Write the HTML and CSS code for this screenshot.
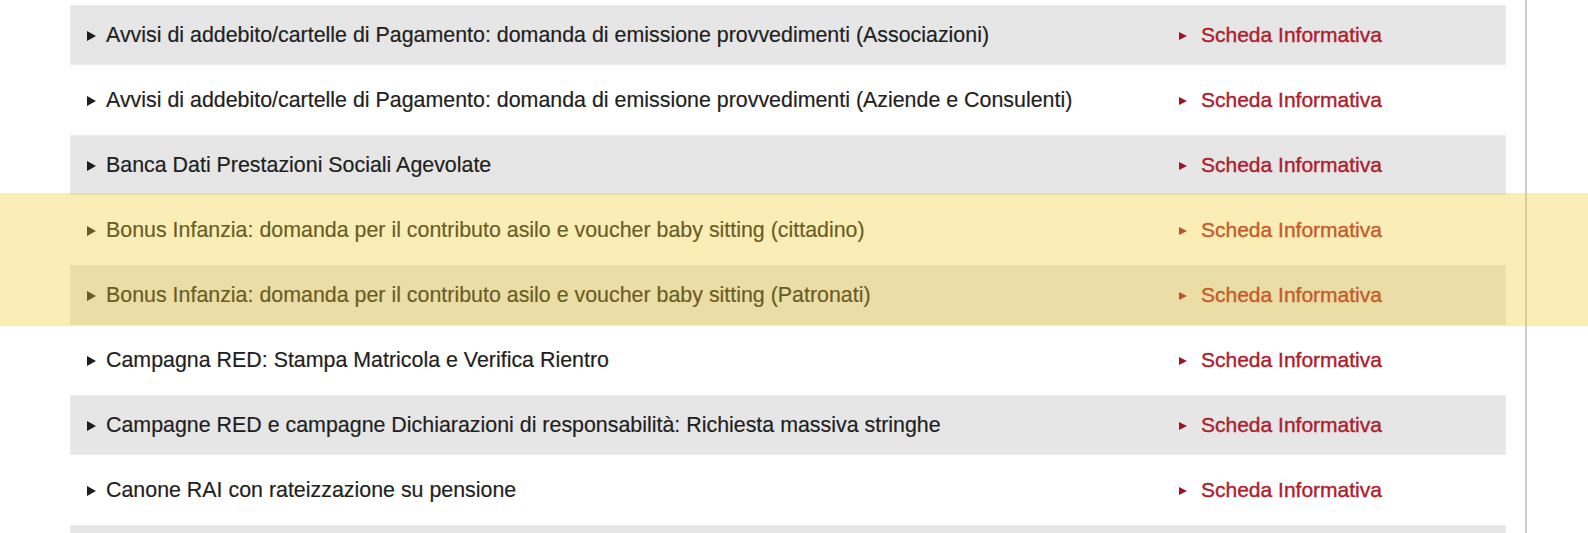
FILE: index.html
```html
<!DOCTYPE html>
<html lang="it">
<head>
<meta charset="utf-8">
<title>Servizi</title>
<link rel="stylesheet" href="styles.css">
</head>
<body>
<div class="page">
  <ul class="services">
    <li class="row alt"><span class="name">Avvisi di addebito/cartelle di Pagamento: domanda di emissione provvedimenti (Associazioni)</span><a class="info" href="#">Scheda Informativa</a></li>
    <li class="row"><span class="name">Avvisi di addebito/cartelle di Pagamento: domanda di emissione provvedimenti (Aziende e Consulenti)</span><a class="info" href="#">Scheda Informativa</a></li>
    <li class="row alt"><span class="name">Banca Dati Prestazioni Sociali Agevolate</span><a class="info" href="#">Scheda Informativa</a></li>
    <li class="row"><span class="name">Bonus Infanzia: domanda per il contributo asilo e voucher baby sitting (cittadino)</span><a class="info" href="#">Scheda Informativa</a></li>
    <li class="row alt"><span class="name">Bonus Infanzia: domanda per il contributo asilo e voucher baby sitting (Patronati)</span><a class="info" href="#">Scheda Informativa</a></li>
    <li class="row"><span class="name">Campagna RED: Stampa Matricola e Verifica Rientro</span><a class="info" href="#">Scheda Informativa</a></li>
    <li class="row alt"><span class="name">Campagne RED e campagne Dichiarazioni di responsabilità: Richiesta massiva stringhe</span><a class="info" href="#">Scheda Informativa</a></li>
    <li class="row"><span class="name">Canone RAI con rateizzazione su pensione</span><a class="info" href="#">Scheda Informativa</a></li>
    <li class="row alt"><span class="name">&nbsp;</span></li>
  </ul>
  <div class="rail"></div>
</div>
<div class="highlight"></div>
</body>
</html>
```

FILE: styles.css
```css
html, body {
  margin: 0;
  padding: 0;
  background: #ffffff;
}
body {
  position: relative;
  width: 1588px;
  height: 533px;
  overflow: hidden;
  font-family: "Liberation Sans", Arial, sans-serif;
}
.page {
  display: flex;
  height: 533px;
}
.services {
  list-style: none;
  margin: 0 0 0 70px;
  padding: 5px 0 0 0;
  width: 1436px;
  display: flex;
  flex-direction: column;
  gap: 5px;
}
.row {
  box-sizing: border-box;
  height: 60px;
  flex: 0 0 60px;
  display: flex;
  align-items: center;
  padding-left: 16px;
  border: 1px solid transparent;
}
.row.alt {
  background: #e6e6e6;
  border-color: #ececec;
}
.name {
  width: 1092px;
  flex: 0 0 1092px;
  display: flex;
  align-items: center;
  font-size: 21.4px;
  color: #1f1f1f;
  -webkit-text-stroke: 0.2px #1f1f1f;
  white-space: nowrap;
}
.name::before {
  content: "";
  width: 0;
  height: 0;
  border-top: 5px solid transparent;
  border-bottom: 5px solid transparent;
  border-left: 9px solid #1e1e1e;
  margin-right: 10px;
  margin-top: 1px;
}
.info {
  display: flex;
  align-items: center;
  font-size: 21px;
  color: #ad1e2c;
  -webkit-text-stroke: 0.4px #ad1e2c;
  text-decoration: none;
  white-space: nowrap;
}
.info::before {
  content: "";
  width: 0;
  height: 0;
  border-top: 4.5px solid transparent;
  border-bottom: 4.5px solid transparent;
  border-left: 8px solid #9e1424;
  margin-right: 14px;
  margin-top: 1px;
}
.rail {
  margin-left: 19px;
  width: 0;
  border-left: 2px solid #cdcdcd;
  height: 533px;
}
.highlight {
  position: absolute;
  left: 0;
  right: 0;
  top: 193px;
  height: 133px;
  background: rgba(240, 203, 43, 0.35);
  pointer-events: none;
}
```
